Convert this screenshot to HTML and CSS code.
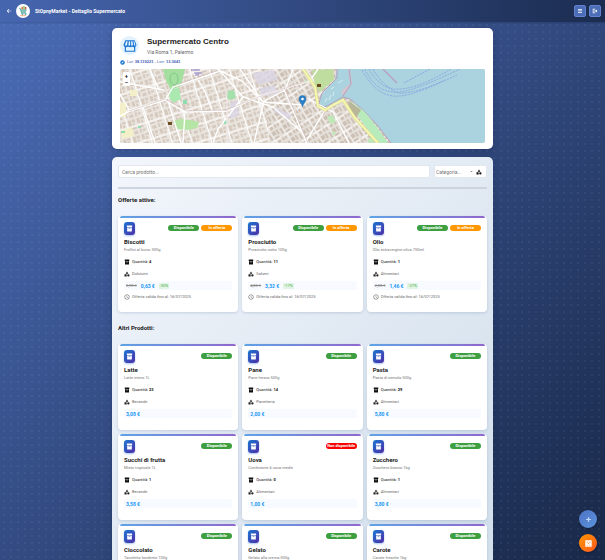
FILE: index.html
```html
<!DOCTYPE html>
<html lang="it">
<head>
<meta charset="utf-8">
<meta name="viewport" content="width=device-width, initial-scale=1">
<title>StOpnyMarket - Dettaglio Supermercato</title>
<link rel="stylesheet" href="styles.css">
</head>
<body>
<svg class="sprite" aria-hidden="true">
  <symbol id="i-box" viewBox="0 0 24 24"><path d="M3 2h18v6H3zM4 9h16v13H4zm5 2v2h6v-2z" fill-rule="evenodd"/></symbol>
  <symbol id="i-cat" viewBox="0 0 24 24"><path d="M12 2l5.500 9h-11zM2 13h8.500v8.500H2zM17.500 12.500a4.700 4.700 0 1 1 0 9.400 4.700 4.700 0 0 1 0-9.400z"/></symbol>
  <symbol id="i-clock" viewBox="0 0 24 24"><path d="M12 2a10 10 0 1 0 0 20 10 10 0 0 0 0-20zm0 2a8 8 0 1 1 0 16 8 8 0 0 1 0-16zm-1 3v6l5 3 1-1.500-4.300-2.500V7z" fill-rule="evenodd"/></symbol>
  <symbol id="i-store" viewBox="0 0 24 24"><path d="M4 2h16l3 8c0 2-1 3-2 3.500V22H3v-8.500C2 13 1 12 1 10zm1.500 2L3.500 10c0 2 3.500 2 3.500 0l1-6zm4.500 0l-.7 6c0 2 3 2 3 0V4zm4 0v6c0 2 3 2 3 0l-.7-6zm4 0l1 6c0 2 3 2 2 0l-1.500-6zM5 14v6h14v-6c-1.500.3-2.500 0-3.500-1-2 1.500-5 1.500-7 0-1 1-2 1.300-3.500 1z" fill-rule="evenodd"/></symbol>
</svg>

<header class="topbar">
  <a class="back" href="#" aria-label="Indietro"><svg viewBox="0 0 24 24"><path d="M21 11H8l5-5-2-2-8 8 8 8 2-2-5-5h13z"/></svg></a>
  <svg class="logo" viewBox="0 0 42 42" aria-hidden="true">
    <circle cx="21" cy="21" r="21" fill="#fff"/>
    <path d="M9 13h4l4 16h15" fill="none" stroke="#348f8b" stroke-width="2"/>
    <path d="M13 16h19l-3 10H16z" fill="#58aaa0"/>
    <path d="M16 8h5v8h-5z" fill="#e2834e"/><path d="M22 6h4v10h-4z" fill="#77b45c"/><path d="M27 9h4v7h-4z" fill="#d9534f"/>
    <path d="M19 17v8M23 17v8M27 17v8M15 21h15" stroke="#cfe9e4" stroke-width="1"/>
    <circle cx="19" cy="31" r="2" fill="#348f8b"/><circle cx="29" cy="31" r="2" fill="#348f8b"/>
    <path d="M12 35h18" stroke="#e2834e" stroke-width="2"/>
  </svg>
  <h1>StOpnyMarket - Dettaglio Supermercato</h1>
  <button class="tool" type="button" aria-label="Elenco"><svg viewBox="0 0 24 24"><path d="M4 4h16v3H4zm0 6h16v3H4zm0 6h16v3H4z"/></svg></button>
  <button class="tool" type="button" aria-label="Esci"><svg viewBox="0 0 24 24"><path d="M3 3h10v3H6v12h7v3H3zM16 6l6 6-6 6v-4H9v-4h7z"/></svg></button>
</header>

<main class="page">
  <section class="panel store">
    <div class="store-head">
      <span class="store-icon"><svg><use href="#i-store"/></svg></span>
      <div>
        <h2>Supermercato Centro</h2>
        <p>Via Roma 1, Palermo</p>
      </div>
    </div>
    <p class="coords"><svg viewBox="0 0 24 24"><path d="M12 1a11 11 0 1 0 0 22 11 11 0 0 0 0-22zm5 6l-3 7-7 3 3-7z" fill-rule="evenodd"/></svg><span>Lat: <b>38.119221</b> - Lon: <b>13.3641</b></span></p>
    <div class="map">
      <svg class="map-art" viewBox="0 0 365 74" preserveAspectRatio="xMidYMid slice" role="img" aria-label="Mappa">
        <defs>
          <pattern id="blocks" width="19" height="17" patternUnits="userSpaceOnUse" patternTransform="rotate(-17)">
            <path d="M0 0h19v17H0z" fill="#e9e4de"/>
            <path d="M1 1h3v5H1zM5 1h4v2H5zM5 4h2v3H5zM11 1h3v6h-3zM15 1h3v3h-3zM15 5h2v2h-2zM1 9h5v2H1zM1 12h2v4H1zM4 13h3v2H4zM10 10h2v5h-2zM13 9h5v2h-5zM14 13h4v3h-4z" fill="#d6cabf"/>
            <path d="M0 8h19M9.500 0v17" stroke="#fff" stroke-width="1"/>
          </pattern>
          <pattern id="blocks-east" width="13" height="15" patternUnits="userSpaceOnUse" patternTransform="rotate(-33)">
            <path d="M0 0h13v15H0z" fill="#e5dfd9"/>
            <path d="M1 1h4v4H1zM6 1h2v5H6zM10 2h2v6h-2zM1 7h5v2H1zM2 11h3v3H2zM7 9h2v5H7zM10 11h2v3h-2z" fill="#cdc1b6"/>
            <path d="M0 0v15M0 10h13" stroke="#fff" stroke-width="1"/>
          </pattern>
        </defs>
        <path d="M0 0h365v74H0z" fill="url(#blocks)"/>
        <path d="M140 0h130v74H150z" fill="url(#blocks-east)"/>
        <g fill="#d9d5e5" opacity=".8"><path d="M132 4l22-3 4 10-20 5zM139 19l15-3 5 8-17 4zM110 34l8-3 1 15-9 4zM155 38l17 8-3 4-15-7z"/></g>
        <g fill="#f3efc8"><path d="M0 34h6v14H0zM1 62l11-4 2 9-12 3zM10 21h7v6h-7z"/></g>
        <path d="M43 0h22l-4 17-10 4-5-9z" fill="#a5dfa0"/>
        <path d="M50 20l9-1 2 11-8 4-4-6z" fill="#abe9b1"/>
        <path d="M53 52l7-2 10 1 9 2-2 6-10 2-11-1z" fill="#b4e5a4"/>
        <path d="M108 22l6-1 2 8-6 2-3-2z" fill="#a5e0ac"/>
        <path d="M63 31h4v4h-4zM18 57h3v2h-3zM104 51h3v4h-3zM1 62h4v2H1z" fill="#8fdcae"/>
        <ellipse cx="54" cy="10" rx="4" ry="6" fill="none" stroke="#7cc98a"/>
        <path d="M192 1l21-1 1 11-14 12-5-7z" fill="#c0dda0"/>
        <path d="M217 0h148v74h-94l-14-18-14-15-13-11-7-1-12 8q-8 5-12-2l2-9 14-15z" fill="#aad3df"/>
        <path d="M230 0l2 14-7 12-4-1 2-5 7-5-2-15z" fill="#d4c6cf"/>
        <path d="M217 0v9l-15 15-3 10q2 5 8 3l16-9 7 2 13 11 14 15 14 18M229 0l2 15-8 12" fill="none" stroke="#b39fba" stroke-width="1"/>
        <path d="M205 33l2-4M209 31l2-5M213 27l1-4M211 20l3-2M218 14l5-3" stroke="#d8edf1"/>
        <path d="M230 32l14 10 13 16 11 16h-10l-18-24z" fill="#b7ebbb"/>
        <path d="M229 32l12 9-6 9-6-9z" fill="#b9b598"/>
        <path d="M207 48l6-2 3 7-6 2zM247 71l5-3 3 6h-6zM212 61l4 3-3 3zM184 10l4 2-2 3z" fill="#bfe7b7"/>
        <g fill="none" stroke="#fff" stroke-width="1.400">
          <path d="M0 47l10-5 35-11 20 12 42-1 33-15 50-15 8-12M45 31l8-13 47-16 23 26 30 10 30 26M10 42l-10-17M107 30v44M48 32l13 42M163 18l24 56M123 28L98 60l-5 14M97 0l25 12 21 21 22-12 8-21M0 13l44 8M72 0l13 23 8 20M120 0l23 33 40 3M65 43l-2 31M187 29l26 14 16 31M205 41l-20 33M30 0l9 21M144 32l-10 42M23 38l12 36"/>
        </g>
        <g fill="none" stroke="#cbb3b2" stroke-width=".5"><path d="M9 42l36-12 22 12 39-1 35-14 47-15M53 17l45-16M107 30v44M164 18l24 56"/></g>
        <path d="M183 0l12 18 3 19 7 4 10-6 8-4 12 18 23 25" fill="none" stroke="#d8d982" stroke-width="3"/>
        <path d="M183 0l12 18 3 19 7 4 10-6 8-4 12 18 23 25" fill="none" stroke="#f6f6b5" stroke-width="2"/>
        <path d="M263 0l14 14" stroke="#b6a5c2" stroke-width="1.500"/>
        <g fill="none" stroke="#859ee2" stroke-width=".8" stroke-dasharray="2 1">
          <path d="M245 0q9 21 28 23 13 3 67-23M249 0q9 17 24 20 22 2 58-20M253 0q10 18 26 24 18 1 58-18M284 14l26-14M242 1q13 24 31 26 16 2 52-16"/>
        </g>
        <path d="M71 1h9M74 4h8M75 6h4" stroke="#8b80ce" stroke-width="1"/>
        <path d="M48 53h4v3h-4zM197 15h4v3h-4z" fill="#6d4b21"/>
        <path d="M182.500 38c-1-4-3.500-5-3.500-8a3.500 3.500 0 0 1 7 0c0 3-2.500 4-3.500 8z" fill="#2a81cb" stroke="#1c639f" stroke-width=".4"/>
        <circle cx="182.500" cy="30" r="1.300" fill="#fff"/>
      </svg>
      <div class="map-zoom">
        <button type="button" aria-label="Ingrandisci">+</button>
        <button type="button" aria-label="Riduci">−</button>
      </div>
    </div>
  </section>

  <section class="panel catalog">
    <form class="filters">
      <input type="search" placeholder="Cerca prodotto..." aria-label="Cerca prodotto">
      <label class="category">
        <select aria-label="Categoria"><option>Categoria...</option></select>
        <svg class="caret" viewBox="0 0 10 10"><path d="M1 3h8L5 7z"/></svg>
        <svg class="cat"><use href="#i-cat"/></svg>
      </label>
    </form>
    <hr>
    <h3>Offerte attive:</h3>
    <div class="grid">
      <article class="card offer">
        <div class="card-top"><span class="chip"><svg><use href="#i-box"/></svg></span><span class="badge ok">Disponibile</span><span class="badge sale">In offerta</span></div>
        <h4>Biscotti</h4><p class="desc">Frollini al burro 300g</p>
        <p class="qty"><svg><use href="#i-box"/></svg><span>Quantità: <b>4</b></span></p>
        <p class="kind"><svg><use href="#i-cat"/></svg>Dolciumi</p>
        <p class="price"><s>0,90 €</s><b>0,63 €</b><em>-30%</em></p>
        <p class="until"><svg><use href="#i-clock"/></svg>Offerta valida fino al: 16/07/2025</p>
      </article>
      <article class="card offer">
        <div class="card-top"><span class="chip"><svg><use href="#i-box"/></svg></span><span class="badge ok">Disponibile</span><span class="badge sale">In offerta</span></div>
        <h4>Prosciutto</h4><p class="desc">Prosciutto cotto 100g</p>
        <p class="qty"><svg><use href="#i-box"/></svg><span>Quantità: <b>11</b></span></p>
        <p class="kind"><svg><use href="#i-cat"/></svg>Salumi</p>
        <p class="price"><s>4,00 €</s><b>3,32 €</b><em>-17%</em></p>
        <p class="until"><svg><use href="#i-clock"/></svg>Offerta valida fino al: 16/07/2025</p>
      </article>
      <article class="card offer">
        <div class="card-top"><span class="chip"><svg><use href="#i-box"/></svg></span><span class="badge ok">Disponibile</span><span class="badge sale">In offerta</span></div>
        <h4>Olio</h4><p class="desc">Olio extravergine oliva 750ml</p>
        <p class="qty"><svg><use href="#i-box"/></svg><span>Quantità: <b>1</b></span></p>
        <p class="kind"><svg><use href="#i-cat"/></svg>Alimentari</p>
        <p class="price"><s>2,00 €</s><b>1,46 €</b><em>-27%</em></p>
        <p class="until"><svg><use href="#i-clock"/></svg>Offerta valida fino al: 16/07/2025</p>
      </article>
    </div>
    <h3>Altri Prodotti:</h3>
    <div class="grid">
      <article class="card">
        <div class="card-top"><span class="chip"><svg><use href="#i-box"/></svg></span><span class="badge ok">Disponibile</span></div>
        <h4>Latte</h4><p class="desc">Latte intero 1L</p>
        <p class="qty"><svg><use href="#i-box"/></svg><span>Quantità: <b>23</b></span></p>
        <p class="kind"><svg><use href="#i-cat"/></svg>Bevande</p>
        <p class="price"><b>3,08 €</b></p>
      </article>
      <article class="card">
        <div class="card-top"><span class="chip"><svg><use href="#i-box"/></svg></span><span class="badge ok">Disponibile</span></div>
        <h4>Pane</h4><p class="desc">Pane fresco 500g</p>
        <p class="qty"><svg><use href="#i-box"/></svg><span>Quantità: <b>14</b></span></p>
        <p class="kind"><svg><use href="#i-cat"/></svg>Panetteria</p>
        <p class="price"><b>2,00 €</b></p>
      </article>
      <article class="card">
        <div class="card-top"><span class="chip"><svg><use href="#i-box"/></svg></span><span class="badge ok">Disponibile</span></div>
        <h4>Pasta</h4><p class="desc">Pasta di semola 500g</p>
        <p class="qty"><svg><use href="#i-box"/></svg><span>Quantità: <b>29</b></span></p>
        <p class="kind"><svg><use href="#i-cat"/></svg>Alimentari</p>
        <p class="price"><b>5,80 €</b></p>
      </article>
      <article class="card">
        <div class="card-top"><span class="chip"><svg><use href="#i-box"/></svg></span><span class="badge ok">Disponibile</span></div>
        <h4>Succhi di frutta</h4><p class="desc">Misto tropicale 1L</p>
        <p class="qty"><svg><use href="#i-box"/></svg><span>Quantità: <b>1</b></span></p>
        <p class="kind"><svg><use href="#i-cat"/></svg>Bevande</p>
        <p class="price"><b>3,58 €</b></p>
      </article>
      <article class="card">
        <div class="card-top"><span class="chip"><svg><use href="#i-box"/></svg></span><span class="badge no">Non disponibile</span></div>
        <h4>Uova</h4><p class="desc">Confezione 6 uova medie</p>
        <p class="qty"><svg><use href="#i-box"/></svg><span>Quantità: <b>0</b></span></p>
        <p class="kind"><svg><use href="#i-cat"/></svg>Alimentari</p>
        <p class="price"><b>1,00 €</b></p>
      </article>
      <article class="card">
        <div class="card-top"><span class="chip"><svg><use href="#i-box"/></svg></span><span class="badge ok">Disponibile</span></div>
        <h4>Zucchero</h4><p class="desc">Zucchero bianco 1kg</p>
        <p class="qty"><svg><use href="#i-box"/></svg><span>Quantità: <b>1</b></span></p>
        <p class="kind"><svg><use href="#i-cat"/></svg>Alimentari</p>
        <p class="price"><b>3,80 €</b></p>
      </article>
      <article class="card">
        <div class="card-top"><span class="chip"><svg><use href="#i-box"/></svg></span><span class="badge ok">Disponibile</span></div>
        <h4>Cioccolato</h4><p class="desc">Tavoletta fondente 100g</p>
      </article>
      <article class="card">
        <div class="card-top"><span class="chip"><svg><use href="#i-box"/></svg></span><span class="badge ok">Disponibile</span></div>
        <h4>Gelato</h4><p class="desc">Gelato alla crema 500g</p>
      </article>
      <article class="card">
        <div class="card-top"><span class="chip"><svg><use href="#i-box"/></svg></span><span class="badge ok">Disponibile</span></div>
        <h4>Carote</h4><p class="desc">Carote fresche 1kg</p>
      </article>
    </div>
  </section>
</main>

<div class="fabs">
  <button class="fab add" type="button" aria-label="Aggiungi"><svg viewBox="0 0 24 24"><path d="M10 4h4v6h6v4h-6v6h-4v-6H4v-4h6z"/></svg></button>
  <button class="fab scan" type="button" aria-label="Statistiche"><svg viewBox="0 0 24 24"><path d="M1 1h22v22H1zm5 5v3h3V6zm9 0v3h3V6zm-5 5v3h4v-3zm-4 5v3h3v-3zm9 0v3h3v-3z" fill-rule="evenodd"/></svg></button>
</div>
</body>
</html>
```
FILE: styles.css
```css
* { box-sizing: border-box; margin: 0; padding: 0; }

html { scrollbar-width: none; }

body {
  min-height: 100vh;
  font-family: Roboto, "Liberation Sans", Arial, sans-serif;
  font-size: 4px;
  line-height: 6px;
  color: #212121;
  background:
    radial-gradient(circle at 4px 4px, rgba(255, 255, 255, .05) 0 1px, transparent 1px) 0 0 / 7px 7px,
    linear-gradient(135deg, #4b6cb7 0%, #182848 100%);
  background-attachment: fixed;
}

button, input, select { font: inherit; color: inherit; border: 0; }
svg { display: block; fill: currentColor; flex: none; }
.sprite { position: absolute; width: 0; height: 0; }

.topbar {
  position: sticky;
  top: 0;
  z-index: 5;
  display: flex;
  align-items: center;
  gap: 3px;
  height: 22px;
  padding: 0 4px 0 6px;
  color: #fff;
  background: linear-gradient(90deg, #4666b0, #1b2c50);
  box-shadow: 0 1px 2px rgba(10, 20, 50, .2);
}
.topbar h1 { flex: 1; margin-left: 2px; font-size: 5px; font-weight: 700; }
.back { color: #fff; }
.back svg { width: 6px; height: 6px; }
.logo { width: 14px; height: 14px; margin-left: 1px; }
.tool {
  display: grid;
  place-items: center;
  width: 12px;
  height: 12px;
  border: 1px solid #6483cf;
  border-radius: 2px;
  background: #4b6cb7;
}
.tool svg { width: 6px; height: 6px; }

.page {
  display: flex;
  flex-direction: column;
  gap: 8px;
  max-width: 381px;
  margin: 0 auto;
  padding-top: 6px;
}
.panel { border-radius: 5px; box-shadow: 0 2px 6px rgba(10, 20, 60, .25); }

.store { padding: 8px 8px 6px; background: #fff; }
.store-head { display: flex; align-items: center; gap: 8px; }
.store-icon {
  display: grid;
  place-items: center;
  width: 19px;
  height: 19px;
  border-radius: 50%;
  color: #1976d2;
  background: #e3f2fd;
}
.store-icon svg { width: 14px; height: 14px; }
.store h2 { font-family: "Liberation Sans", Arial, sans-serif; font-size: 8px; line-height: 10px; }
.store-head p { margin-top: 2px; font-size: 5px; color: #666; }
.coords { display: flex; align-items: center; gap: 2px; margin: 4px 0; color: #3f62b5; font-family: "Liberation Sans", Arial, sans-serif; }
.coords svg { width: 5px; height: 5px; color: #1976d2; }
.map { position: relative; height: 74px; border-radius: 2px; overflow: hidden; }
.map-art { width: 100%; height: 100%; }
.map-zoom { position: absolute; top: 3px; left: 3px; display: flex; flex-direction: column; border-radius: 1px; background: #fff; }
.map-zoom button { width: 7px; height: 7px; font-size: 6px; font-weight: 700; line-height: 6px; background: none; }

.catalog { padding: 8px 6px; background: linear-gradient(135deg, #f3f6fc, #d3e0ec 85%); }
.filters { display: flex; gap: 4px; }
.filters input {
  flex: 1;
  min-width: 0;
  height: 13px;
  padding: 0 3px;
  border: 1px solid #e3e7ee;
  border-radius: 2px;
  font-size: 5px;
  background: #fff;
}
.filters input::placeholder { color: #757575; }
.category { display: flex; align-items: center; gap: 3px; height: 13px; padding: 0 4px 0 1px; border: 1px solid #e3e7ee; border-radius: 2px; background: #fff; }
.category select { width: 31px; appearance: none; font-size: 5px; color: #777; background: none; }
.category .caret { width: 3px; height: 3px; color: #666; }
.category .cat { width: 6px; height: 6px; color: #111; }
hr { height: 2px; margin: 9px 0 0; border: 0; background: #cdd4dd; }
h3 { margin: 7px 0 12px; font-size: 6px; line-height: 8px; }

.grid { display: grid; grid-template-columns: repeat(3, 1fr); gap: 4px; }
.grid + h3 { margin-top: 12px; }
.card {
  position: relative;
  min-height: 86px;
  padding: 6px;
  border-radius: 4px;
  background: #fff;
  box-shadow: 0 1px 3px rgba(60, 90, 140, .2);
}
.card.offer { min-height: 96px; }
.card::before {
  content: "";
  position: absolute;
  top: 0;
  left: 2px;
  right: 2px;
  height: 2px;
  border-radius: 2px 2px 0 0;
  background: linear-gradient(90deg, #5fa3e6, #9068cd);
}
.card-top { display: flex; gap: 2px; }
.chip {
  display: grid;
  place-items: center;
  width: 11px;
  height: 13px;
  margin-right: auto;
  border-radius: 3px;
  color: #fff;
  background: linear-gradient(135deg, #1976d2, #512da8);
  box-shadow: 0 1px 2px rgba(25, 118, 210, .4);
}
.chip svg { width: 7px; height: 7px; }
.badge {
  width: 31px;
  height: 6px;
  margin-top: 3px;
  border-radius: 3px;
  font-size: 4px;
  font-weight: 700;
  text-align: center;
  color: #fff;
}
.ok { background: #3d9f40; }
.sale { background: #ff9800; }
.no { background: #f80000; }
.card h4 { margin-top: 3px; font-size: 6px; line-height: 8px; }
.desc { margin-top: 1px; color: #777; }
.qty, .kind, .until { display: flex; align-items: center; gap: 2px; }
.qty svg, .kind svg, .until svg { width: 6px; height: 6px; }
.qty { margin-top: 6px; color: #111; }
.kind { margin-top: 6px; color: #666; }
.kind svg { color: #222; }
.until { margin-top: 4px; color: #666; }
.price {
  display: flex;
  align-items: center;
  gap: 4px;
  height: 9px;
  margin-top: 4px;
  padding: 0 2px;
  border-radius: 1px;
  background: #f7fbff;
}
.price s { color: #888; }
.price b { font-size: 5px; color: #2196f3; }
.price em { padding: 0 1px; font-style: normal; color: #4caf50; background: #e2f4e3; }

.fabs { position: fixed; right: 8px; bottom: 8px; z-index: 5; display: flex; flex-direction: column; gap: 6px; }
.fab { display: grid; place-items: center; width: 18px; height: 18px; border-radius: 50%; color: #fff; box-shadow: 0 1px 3px rgba(0, 0, 0, .3); }
.fab svg { width: 7px; height: 7px; }
.add { color: #c7dbfa; background: linear-gradient(135deg, #4e72c5, #5c94dc); }
.scan { background: linear-gradient(135deg, #ff9800, #ff5722); }
```
